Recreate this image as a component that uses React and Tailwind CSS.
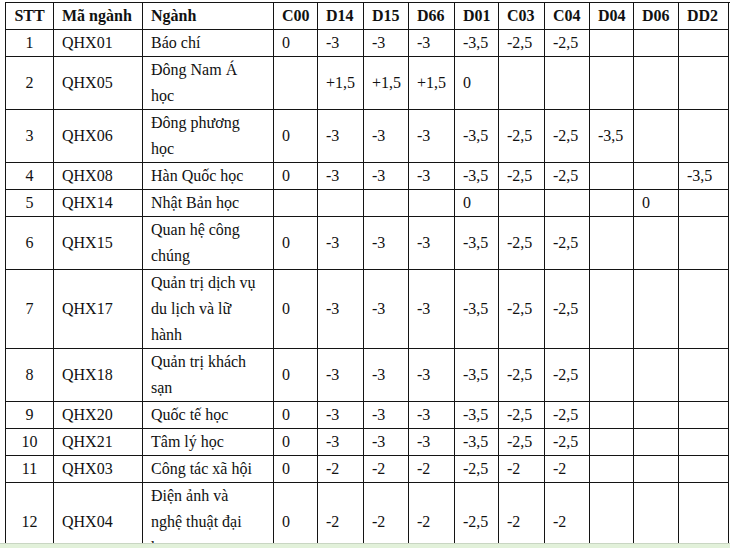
import React from 'react';

const cols = ['C00', 'D14', 'D15', 'D66', 'D01', 'C03', 'C04', 'D04', 'D06', 'DD2'];

// scores follow the order of cols
const rows = [
  { stt: 1, code: 'QHX01', name: ['Báo chí'], s: ['0', '-3', '-3', '-3', '-3,5', '-2,5', '-2,5', '', '', ''] },
  { stt: 2, code: 'QHX05', name: ['Đông Nam Á', 'học'], s: ['', '+1,5', '+1,5', '+1,5', '0', '', '', '', '', ''] },
  { stt: 3, code: 'QHX06', name: ['Đông phương', 'học'], s: ['0', '-3', '-3', '-3', '-3,5', '-2,5', '-2,5', '-3,5', '', ''] },
  { stt: 4, code: 'QHX08', name: ['Hàn Quốc học'], s: ['0', '-3', '-3', '-3', '-3,5', '-2,5', '-2,5', '', '', '-3,5'] },
  { stt: 5, code: 'QHX14', name: ['Nhật Bản học'], s: ['', '', '', '', '0', '', '', '', '0', ''] },
  { stt: 6, code: 'QHX15', name: ['Quan hệ công', 'chúng'], s: ['0', '-3', '-3', '-3', '-3,5', '-2,5', '-2,5', '', '', ''] },
  { stt: 7, code: 'QHX17', name: ['Quản trị dịch vụ', 'du lịch và lữ', 'hành'], s: ['0', '-3', '-3', '-3', '-3,5', '-2,5', '-2,5', '', '', ''] },
  { stt: 8, code: 'QHX18', name: ['Quản trị khách', 'sạn'], s: ['0', '-3', '-3', '-3', '-3,5', '-2,5', '-2,5', '', '', ''] },
  { stt: 9, code: 'QHX20', name: ['Quốc tế học'], s: ['0', '-3', '-3', '-3', '-3,5', '-2,5', '-2,5', '', '', ''] },
  { stt: 10, code: 'QHX21', name: ['Tâm lý học'], s: ['0', '-3', '-3', '-3', '-3,5', '-2,5', '-2,5', '', '', ''] },
  { stt: 11, code: 'QHX03', name: ['Công tác xã hội'], s: ['0', '-2', '-2', '-2', '-2,5', '-2', '-2', '', '', ''] },
  { stt: 12, code: 'QHX04', name: ['Điện ảnh và', 'nghệ thuật đại', 'học'], s: ['0', '-2', '-2', '-2', '-2,5', '-2', '-2', '', '', ''] },
];

const grid =
  'grid grid-cols-[48px_89px_131px_44px_46px_45px_46px_44px_46px_45px_44px_45px_50px] border-l border-[#141414]';
const cell = 'flex items-center border-r border-b border-[#141414] px-2 whitespace-nowrap';

function Row({ r }) {
  return (
    <div className={grid}>
      <div className={`${cell} justify-center`}>{r.stt}</div>
      <div className={cell}>{r.code}</div>
      <div className={`${cell} flex-col items-start justify-center`}>
        {r.name.map((line, i) => (
          <div key={i}>{line}</div>
        ))}
      </div>
      {r.s.map((v, i) => (
        <div key={i} className={cell}>
          {v}
        </div>
      ))}
    </div>
  );
}

export default function App() {
  return (
    <div className="flex h-[548px] w-[730px] flex-col overflow-hidden bg-white font-['Liberation_Serif','Times_New_Roman',serif] text-[16px] leading-[26px] text-[#111]">
      <div className="flex-1 overflow-hidden pl-[5px] pt-[2px]">
        <div className={`${grid} border-t font-bold`}>
          <div className={`${cell} justify-center`}>STT</div>
          <div className={cell}>Mã ngành</div>
          <div className={cell}>Ngành</div>
          {cols.map((c) => (
            <div key={c} className={cell}>
              {c}
            </div>
          ))}
        </div>
        {rows.map((r) => (
          <Row key={r.stt} r={r} />
        ))}
      </div>
      <div className="h-[5px] shrink-0 border-t border-[#c9d6c3] bg-[#e2f1da]" />
    </div>
  );
}
